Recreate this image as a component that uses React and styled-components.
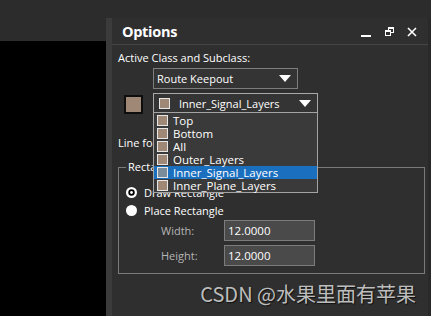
import React from "react";
import styled, { createGlobalStyle } from "styled-components";

const GlobalStyle = createGlobalStyle`
  html, body {
    margin: 0;
    padding: 0;
    background: #2c2c2c;
  }
  body {
    font-family: "Open Sans", "Noto Sans", sans-serif;
    font-size: 11px;
    color: #ffffff;
  }
`;

const layers = [
  "Top",
  "Bottom",
  "All",
  "Outer_Layers",
  "Inner_Signal_Layers",
  "Inner_Plane_Layers",
];

const Page = styled.div`
  position: relative;
  width: 431px;
  height: 316px;
  display: grid;
  grid-template-columns: 106px 1fr;
  overflow: hidden;
  background: #2c2c2c;
`;

const LeftColumn = styled.div`
  display: flex;
  flex-direction: column;
`;

const TopBand = styled.div`
  height: 41px;
  background: #2c2c2c;
`;

const Canvas = styled.div`
  flex: 1;
  background: #000000;
`;

const Panel = styled.div`
  margin-top: 18px;
  background: #2f2f2f;
  border-left: 6px solid #3b3b3b;
  border-right: 3px solid #292929;
  display: flex;
  flex-direction: column;
`;

const Header = styled.div`
  height: 26px;
  display: flex;
  align-items: center;
  padding: 0 10px 0 10px;
  border-bottom: 1px solid #454545;
`;

const Title = styled.div`
  flex: 1;
  font-size: 14.5px;
  font-weight: 700;
  letter-spacing: -0.3px;
  color: #ffffff;
`;

const HeaderIcons = styled.div`
  display: flex;
  align-items: center;
  gap: 13px;
  padding: 2px 1px 0 0;
`;

const Body = styled.div`
  padding: 5px 3px 0 6px;
  display: flex;
  flex-direction: column;
`;

const Label = styled.div`
  line-height: 16px;
  height: ${(p) => p.$h || 16}px;
  margin-top: ${(p) => p.$top || 0}px;
  display: flex;
  align-items: center;
  white-space: nowrap;
  color: ${(p) => (p.$dim ? "#b9b9b9" : "#ffffff")};
`;

const Select = styled.div`
  position: relative;
  box-sizing: border-box;
  width: ${(p) => p.$w}px;
  height: ${(p) => p.$h}px;
  margin-left: ${(p) => p.$left}px;
  margin-top: ${(p) => p.$top || 0}px;
  border: 1px solid ${(p) => p.$border};
  background: #343434;
  display: flex;
  align-items: center;
  padding: 0 5px 0 3px;
`;

const SelectText = styled.span`
  flex: 1;
  white-space: nowrap;
`;

const Arrow = styled.span`
  width: 0;
  height: 0;
  border-left: 6px solid transparent;
  border-right: 6px solid transparent;
  border-top: 7px solid #ffffff;
  margin-right: 1px;
`;

const ColorRow = styled.div`
  display: flex;
  align-items: flex-start;
  margin-top: 4px;
`;

const Swatch = styled.div`
  box-sizing: border-box;
  width: 19px;
  height: 19px;
  margin: 2px 0 0 6px;
  background: #a08877;
  border: 2px solid #0e0e0e;
`;

const Chip = styled.span`
  box-sizing: border-box;
  width: 11px;
  height: 11px;
  margin: ${(p) => p.$m || "0 5px 0 3px"};
  background: ${(p) => (p.$active ? "#7b8c9a" : "#a08877")};
  border: 1px solid #e6e6e6;
  flex-shrink: 0;
`;

const List = styled.div`
  position: absolute;
  top: 100%;
  left: -1px;
  width: 165px;
  box-sizing: border-box;
  padding-top: 1px;
  border: 1px solid #a4a4a4;
  background: #3a3a3a;
  z-index: 2;
`;

const Item = styled.div`
  height: 13px;
  display: flex;
  align-items: center;
  white-space: nowrap;
  font-size: 11.5px;
  background: ${(p) => (p.$active ? "#1b6fbf" : "transparent")};
`;

const Group = styled.fieldset`
  margin: 7px 0 0 0;
  padding: 0 0 7px 7px;
  border: 1px solid #7a7a7a;
  min-width: 0;
`;

const Legend = styled.legend`
  padding: 0 2px;
  margin-left: 0;
  line-height: 16px;
  color: #ffffff;
`;

const RadioRow = styled.div`
  height: 18px;
  display: flex;
  align-items: center;
  gap: 7px;
  margin-top: ${(p) => p.$top || 0}px;
`;

const FieldRow = styled.div`
  display: flex;
  align-items: center;
  margin: ${(p) => p.$top}px 0 0 35px;
`;

const FieldLabel = styled.span`
  width: 63px;
  color: #b5b5b5;
`;

const Input = styled.div`
  box-sizing: border-box;
  width: 91px;
  height: 21px;
  border: 1px solid #7c7c7c;
  background: #4a4a4a;
  display: flex;
  align-items: center;
  padding-left: 3px;
  font-size: 11.5px;
`;

const Watermark = styled.div`
  position: absolute;
  right: 15px;
  bottom: 8px;
  font-family: "Noto Sans CJK SC", "Liberation Sans", sans-serif;
  font-size: 20px;
  color: #bdbdbd;
  text-shadow: 1px 1px 1px #111111;
  white-space: nowrap;
`;

const Radio = ({ checked }) => (
  <svg width="11" height="11" viewBox="0 0 11 11">
    <circle cx="5.5" cy="5.5" r="5.5" fill="#ffffff" />
    {checked && <circle cx="5.5" cy="5.5" r="3.2" fill="#000000" />}
    {checked && <circle cx="5.5" cy="5.5" r="1.4" fill="#ffffff" />}
  </svg>
);

const MinIcon = () => (
  <svg width="11" height="11" viewBox="0 0 11 11">
    <rect x="0" y="8" width="10" height="2" fill="#ffffff" />
  </svg>
);

const RestoreIcon = () => (
  <svg width="9" height="10" viewBox="0 0 9 10">
    <rect x="3.5" y="0.5" width="5" height="5" fill="none" stroke="#ffffff" />
    <rect x="3" y="0" width="6" height="2" fill="#ffffff" />
    <rect x="0.5" y="3.5" width="5" height="5" fill="#2f2f2f" stroke="#ffffff" />
    <rect x="0" y="3" width="6" height="2" fill="#ffffff" />
  </svg>
);

const CloseIcon = () => (
  <svg width="10" height="10" viewBox="0 0 10 10">
    <path d="M1 1 L9 9 M9 1 L1 9" stroke="#ffffff" strokeWidth="1.6" />
  </svg>
);

export default function App() {
  return (
    <Page>
      <GlobalStyle />
      <LeftColumn>
        <TopBand />
        <Canvas />
      </LeftColumn>
      <Panel>
        <Header>
          <Title>Options</Title>
          <HeaderIcons>
            <MinIcon />
            <RestoreIcon />
            <CloseIcon />
          </HeaderIcons>
        </Header>
        <Body>
          <Label>Active Class and Subclass:</Label>
          <Select $w={145} $h={21} $left={35} $top={2} $border="#7d7d7d">
            <SelectText>Route Keepout</SelectText>
            <Arrow />
          </Select>
          <ColorRow>
            <Swatch />
            <Select $w={165} $h={20} $left={10} $border="#a9a9a9">
              <Chip $m="0 9px 0 2px" />
              <SelectText>Inner_Signal_Layers</SelectText>
              <Arrow />
              <List>
                {layers.map((name) => {
                  const active = name === "Inner_Signal_Layers";
                  return (
                    <Item key={name} $active={active}>
                      <Chip $active={active} />
                      {name}
                    </Item>
                  );
                })}
              </List>
            </Select>
          </ColorRow>
          <Label $top={20} $h={18}>Line font:</Label>
          <Group>
            <Legend>Rectangle Creation</Legend>
            <RadioRow $top={8}>
              <Radio checked />
              Draw Rectangle
            </RadioRow>
            <RadioRow>
              <Radio />
              Place Rectangle
            </RadioRow>
            <FieldRow $top={1}>
              <FieldLabel>Width:</FieldLabel>
              <Input>12.0000</Input>
            </FieldRow>
            <FieldRow $top={4}>
              <FieldLabel>Height:</FieldLabel>
              <Input>12.0000</Input>
            </FieldRow>
          </Group>
        </Body>
      </Panel>
      <Watermark>CSDN @水果里面有苹果</Watermark>
    </Page>
  );
}
